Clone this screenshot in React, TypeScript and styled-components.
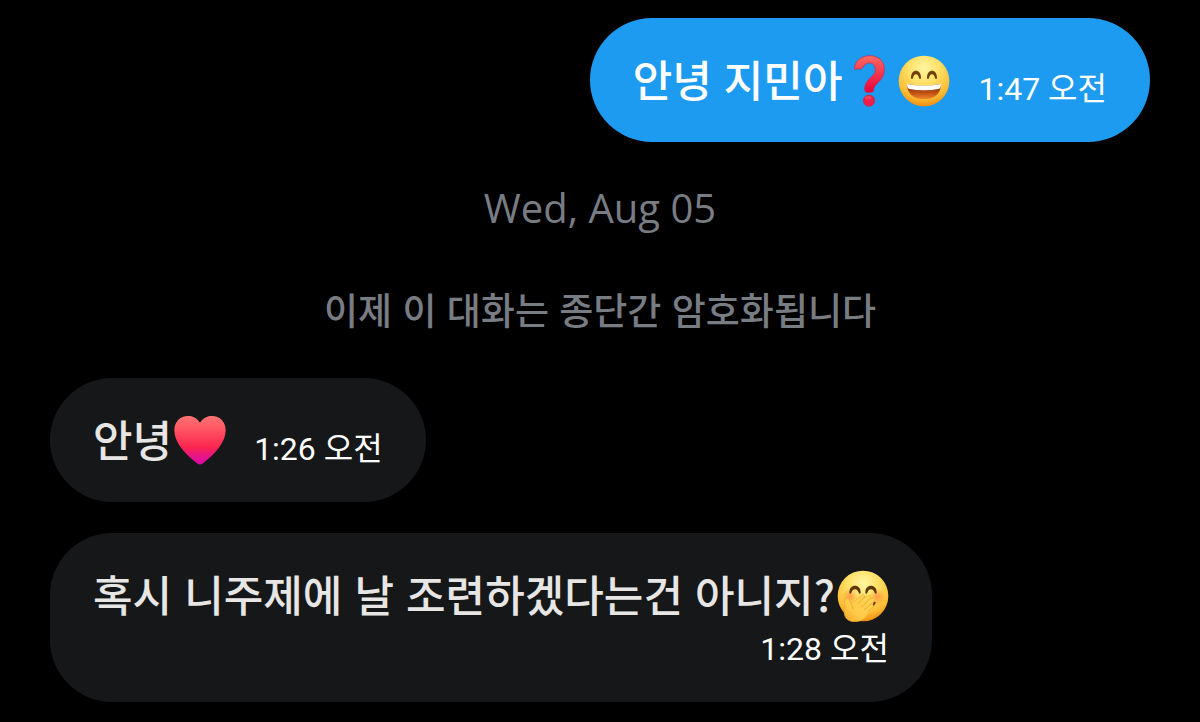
import React from 'react';
import styled, { createGlobalStyle } from 'styled-components';

const GlobalStyle = createGlobalStyle`
  html, body {
    margin: 0;
    background: #000;
  }
  body {
    font-family: Roboto, "Noto Sans CJK KR", sans-serif;
  }
`;

const Conversation = styled.main`
  display: flex;
  flex-direction: column;
  padding: 18px 50px 20px;
`;

const Bubble = styled.article<{ $sent?: boolean; $stacked?: boolean }>`
  display: flex;
  flex-direction: ${(p) => (p.$stacked ? 'column' : 'row')};
  align-items: flex-end;
  align-self: ${(p) => (p.$sent ? 'flex-end' : 'flex-start')};
  column-gap: 28px;
  padding: 34px 43px 30px;
  border-radius: 62px;
  background: ${(p) => (p.$sent ? '#1d9bf0' : '#151719')};
  color: ${(p) => (p.$sent ? '#fff' : '#e7e6e4')};

  & + & {
    margin-top: 31px;
  }
`;

const Message = styled.p`
  display: flex;
  align-items: flex-start;
  margin: 0;
  padding-bottom: 5px;
  font-family: "Noto Sans CJK KR", sans-serif;
  font-size: 43px;
  font-weight: 500;
  line-height: 52px;
  white-space: nowrap;
`;

const Time = styled.time`
  color: #fff;
  font-size: 32px;
  line-height: 45px;
  white-space: nowrap;
`;

const Notices = styled.div`
  display: flex;
  flex-direction: column;
  gap: 48px;
  margin: 40px 0 42px;
  color: #787c83;
  text-align: center;
`;

const DateLabel = styled.time`
  font-family: "Open Sans", sans-serif;
  font-size: 40px;
  line-height: 52px;
`;

const Notice = styled.p`
  margin: 0;
  font-family: "Noto Sans CJK KR", sans-serif;
  font-size: 37px;
  font-weight: 500;
  line-height: 54px;
`;

const Emoji = styled.svg`
  flex: none;
  width: 52px;
  height: 52px;
  margin: 3px 0 0 2px;
`;

const QuestionEmoji = () => (
  <Emoji viewBox="0 0 156 156" role="img" aria-label="빨간색 물음표">
    <defs>
      <linearGradient id="question" x1="0" y1="0" x2="0" y2="1">
        <stop offset="0" stopColor="#ff6b61" />
        <stop offset="0.5" stopColor="#f5344f" />
        <stop offset="1" stopColor="#e8003f" />
      </linearGradient>
    </defs>
    <path
      d="M31 40C34 16 53 2 78 2C104 2 121 19 121 43C121 65 109 76 99 86C92 93 89 98 89 106Q89 112 82 112H69Q62 112 62 105C61 88 70 77 81 67C91 58 95 52 94 43C93 32 87 24 77 24C67 24 60 30 57 37Q55 42 49 42H38Q30 45 31 40Z"
      fill="url(#question)"
      stroke="#c3274c"
      strokeWidth="2"
    />
    <circle cx="75" cy="137" r="17" fill="#ee1d49" stroke="#c3274c" strokeWidth="2" />
    <ellipse cx="73" cy="128" rx="10" ry="5" fill="#ff5a62" opacity="0.6" />
  </Emoji>
);

const FaceGradient = ({ id }: { id: string }) => (
  <radialGradient id={id} cx="0.5" cy="0.25" r="0.76">
    <stop offset="0" stopColor="#fff6a0" />
    <stop offset="0.4" stopColor="#ffe066" />
    <stop offset="0.78" stopColor="#fdbd33" />
    <stop offset="1" stopColor="#ee8a10" />
  </radialGradient>
);

const GrinEmoji = () => (
  <Emoji viewBox="0 0 156 156" role="img" aria-label="웃는 눈으로 활짝 웃는 얼굴">
    <defs>
      <FaceGradient id="grin-face" />
      <linearGradient id="grin-mouth" x1="0" y1="0" x2="0" y2="1">
        <stop offset="0.2" stopColor="#8a340c" />
        <stop offset="0.6" stopColor="#c45214" />
        <stop offset="1" stopColor="#f08a2a" />
      </linearGradient>
    </defs>
    <circle cx="78" cy="78" r="76" fill="url(#grin-face)" />
    <g fill="#70400c">
      <path d="M39 69C39 53 46 47 54 47C62 47 69 53 69 69C69 73 64 73 63 69C61 61 58 58 54 58C50 58 47 61 45 69C44 73 39 73 39 69Z" />
      <path d="M87 69C87 53 94 47 102 47C110 47 117 53 117 69C117 73 112 73 111 69C109 61 106 58 102 58C98 58 95 61 93 69C92 73 87 73 87 69Z" />
    </g>
    <path d="M27 87Q78 97 129 87C129 116 110 133 78 133C46 133 27 116 27 87Z" fill="url(#grin-mouth)" />
    <path d="M27 87Q78 96 129 87Q130 96 124 101Q78 110 32 101Q26 96 27 87Z" fill="#fff" />
  </Emoji>
);

const HeartEmoji = () => (
  <Emoji viewBox="0 0 156 156" role="img" aria-label="빨간색 하트">
    <defs>
      <linearGradient id="heart" x1="0" y1="0" x2="0" y2="1">
        <stop offset="0" stopColor="#ff7472" />
        <stop offset="0.35" stopColor="#ff4c60" />
        <stop offset="0.65" stopColor="#fc254f" />
        <stop offset="0.85" stopColor="#e51290" />
        <stop offset="1" stopColor="#dc08a6" />
      </linearGradient>
    </defs>
    <path
      d="M78 23C68 8 55 3 42 3C18 3 1 21 1 46C1 84 35 119 69 145Q78 152 87 145C121 119 155 84 155 46C155 21 138 3 114 3C101 3 88 8 78 23Z"
      fill="url(#heart)"
    />
  </Emoji>
);

const GiggleEmoji = () => (
  <Emoji viewBox="0 0 156 156" role="img" aria-label="손으로 입을 가린 얼굴">
    <defs>
      <FaceGradient id="giggle-face" />
      <radialGradient id="giggle-blush">
        <stop offset="0" stopColor="#ff6a32" stopOpacity="0.55" />
        <stop offset="1" stopColor="#ff7a32" stopOpacity="0" />
      </radialGradient>
      <linearGradient id="giggle-hand" x1="1" y1="0" x2="0" y2="1">
        <stop offset="0" stopColor="#ffd556" />
        <stop offset="0.65" stopColor="#ffcb46" />
        <stop offset="1" stopColor="#f3a329" />
      </linearGradient>
    </defs>
    <circle cx="78" cy="78" r="76" fill="url(#giggle-face)" />
    <circle cx="39" cy="80" r="25" fill="url(#giggle-blush)" />
    <circle cx="121" cy="80" r="25" fill="url(#giggle-blush)" />
    <g fill="#603507">
      <path d="M37 68C37 53 45 47 54 47C63 47 71 53 71 68C71 72 66 72 65 68C62 61 59 58 54 58C49 58 46 61 43 68C42 72 37 72 37 68Z" />
      <path d="M85 68C85 53 93 47 102 47C111 47 119 53 119 68C119 72 114 72 113 68C110 61 107 58 102 58C97 58 94 61 91 68C90 72 85 72 85 68Z" />
    </g>
    <path d="M96 113Q108 111 113 98" fill="none" stroke="#70300c" strokeWidth="6" strokeLinecap="round" />
    <path
      d="M23 96C22 87 31 82 36 89L43 102L73 76C80 70 87 77 81 83L91 78C99 73 105 80 99 87L103 85C111 82 115 89 109 95L101 103C109 100 112 108 106 113L96 122C91 142 75 155 53 155C34 155 23 145 22 129C21 117 25 109 23 96Z"
      fill="url(#giggle-hand)"
      stroke="#efab33"
      strokeWidth="2"
    />
    <g fill="none" stroke="#e09a28" strokeWidth="2" strokeLinecap="round">
      <path d="M82 82L62 102" />
      <path d="M99 87L73 111" />
      <path d="M101 103L82 119" />
      <path d="M43 102Q49 108 47 116" />
    </g>
  </Emoji>
);

export default function App() {
  return (
    <>
      <GlobalStyle />
      <Conversation lang="ko">
        <Bubble $sent>
          <Message>
            안녕 지민아
            <QuestionEmoji />
            <GrinEmoji />
          </Message>
          <Time>1:47 오전</Time>
        </Bubble>

        <Notices>
          <DateLabel>Wed, Aug 05</DateLabel>
          <Notice>이제 이 대화는 종단간 암호화됩니다</Notice>
        </Notices>

        <Bubble>
          <Message>
            안녕
            <HeartEmoji />
          </Message>
          <Time>1:26 오전</Time>
        </Bubble>

        <Bubble $stacked>
          <Message>
            혹시 니주제에 날 조련하겠다는건 아니지?
            <GiggleEmoji />
          </Message>
          <Time>1:28 오전</Time>
        </Bubble>
      </Conversation>
    </>
  );
}
